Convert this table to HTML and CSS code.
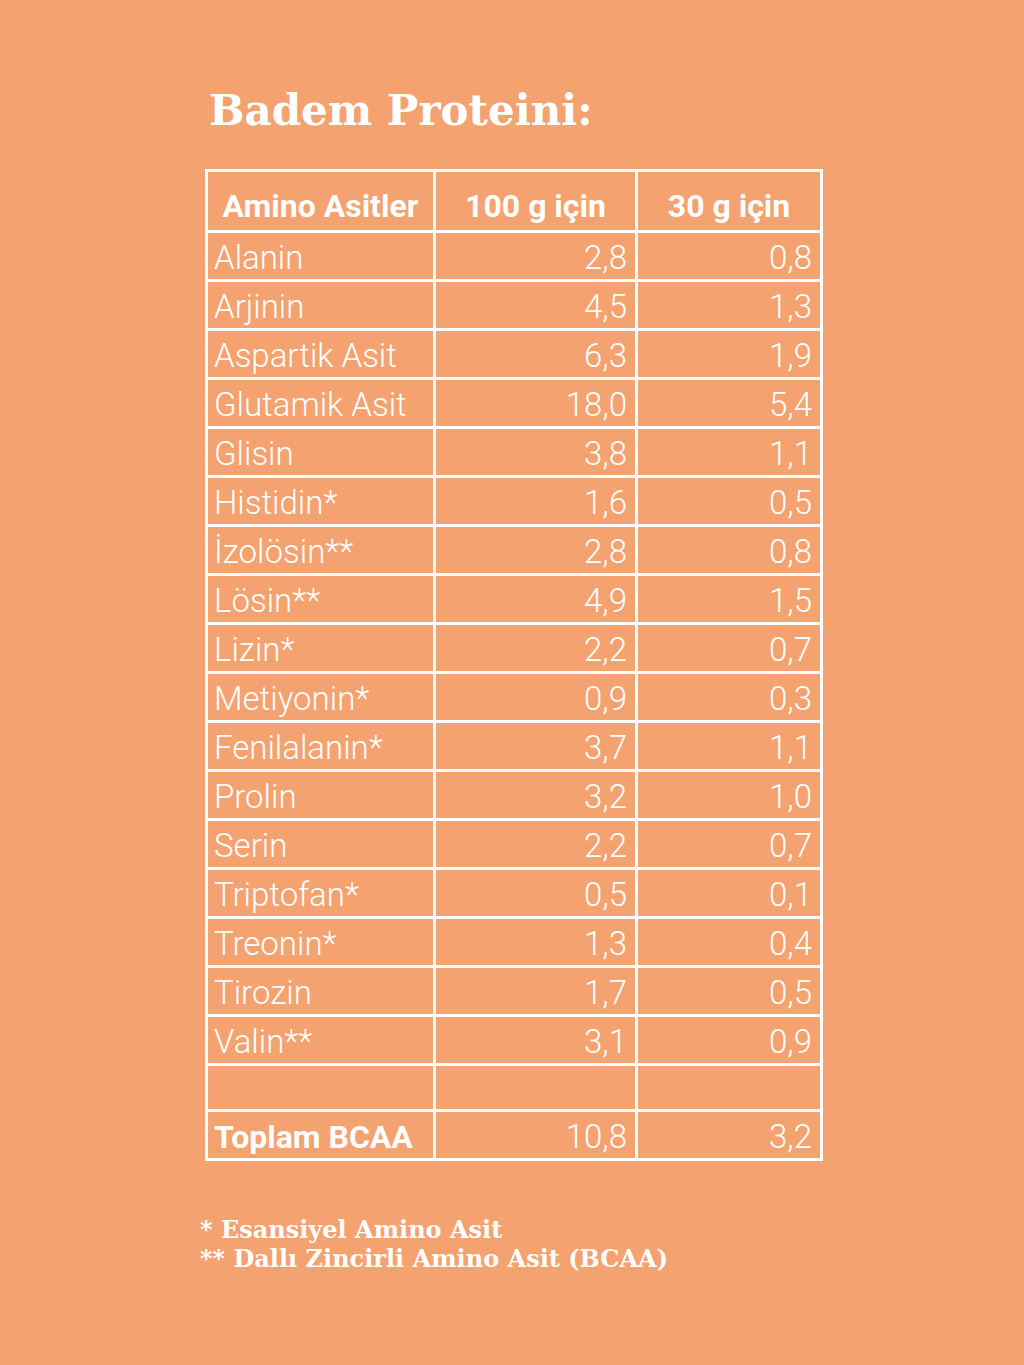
FILE: index.html
```html
<!DOCTYPE html>
<html lang="tr">
<head>
<meta charset="utf-8">
<link rel="stylesheet" href="styles.css">
</head>
<body>
<main class="page">
  <h1 class="title">Badem Proteini:</h1>
  <table class="amino">
    <colgroup><col class="c1"><col class="c2"><col class="c3"></colgroup>
    <thead>
      <tr><th>Amino Asitler</th><th>100 g için</th><th>30 g için</th></tr>
    </thead>
    <tbody>
      <tr><td>Alanin</td><td>2,8</td><td>0,8</td></tr>
      <tr><td>Arjinin</td><td>4,5</td><td>1,3</td></tr>
      <tr><td>Aspartik Asit</td><td>6,3</td><td>1,9</td></tr>
      <tr><td>Glutamik Asit</td><td>18,0</td><td>5,4</td></tr>
      <tr><td>Glisin</td><td>3,8</td><td>1,1</td></tr>
      <tr><td>Histidin*</td><td>1,6</td><td>0,5</td></tr>
      <tr><td>İzolösin**</td><td>2,8</td><td>0,8</td></tr>
      <tr><td>Lösin**</td><td>4,9</td><td>1,5</td></tr>
      <tr><td>Lizin*</td><td>2,2</td><td>0,7</td></tr>
      <tr><td>Metiyonin*</td><td>0,9</td><td>0,3</td></tr>
      <tr><td>Fenilalanin*</td><td>3,7</td><td>1,1</td></tr>
      <tr><td>Prolin</td><td>3,2</td><td>1,0</td></tr>
      <tr><td>Serin</td><td>2,2</td><td>0,7</td></tr>
      <tr><td>Triptofan*</td><td>0,5</td><td>0,1</td></tr>
      <tr><td>Treonin*</td><td>1,3</td><td>0,4</td></tr>
      <tr><td>Tirozin</td><td>1,7</td><td>0,5</td></tr>
      <tr><td>Valin**</td><td>3,1</td><td>0,9</td></tr>
      <tr><td></td><td></td><td></td></tr>
      <tr class="total"><td>Toplam BCAA</td><td>10,8</td><td>3,2</td></tr>
    </tbody>
  </table>
  <div class="notes">
    <p>* Esansiyel Amino Asit</p>
    <p>** Dallı Zincirli Amino Asit (BCAA)</p>
  </div>
</main>
</body>
</html>
```

FILE: styles.css
```css
html, body {
  margin: 0;
  padding: 0;
  background: #f4a26f;
}
.page {
  width: 1024px;
  height: 1365px;
  box-sizing: border-box;
  padding: 86px 0 0 205px;
  color: #ffffff;
}
.title {
  margin: 0 0 0 4px;
  font-family: "DejaVu Serif", "Liberation Serif", serif;
  font-weight: 700;
  font-size: 42px;
  line-height: 50px;
  height: 50px;
  letter-spacing: 0;
}
.amino {
  margin-top: 33px;
  border-collapse: collapse;
  table-layout: fixed;
  width: 618px;
  border: 3px solid #fff;
  font-family: Roboto, "Noto Sans", sans-serif;
  font-weight: 300;
  font-size: 33px;
}
.c1 { width: 228px; }
.c2 { width: 202px; }
.c3 { width: 185px; }
.amino th, .amino td {
  border: 3px solid #fff;
  padding: 0 8px;
  white-space: nowrap;
  overflow: hidden;
  box-sizing: border-box;
  vertical-align: middle;
}
.amino th {
  height: 58px;
  font-weight: 700;
  font-size: 32px;
  text-align: center;
  padding-top: 10px;
  line-height: 48px;
}
.amino td {
  height: 46px;
  padding-top: 4px;
  line-height: 42px;
  text-align: right;
}
.amino td:first-child {
  text-align: left;
  padding-left: 6px;
}
.amino .total td:first-child {
  font-weight: 700;
  font-size: 32px;
}
.notes {
  margin-top: 54px;
  margin-left: -5px;
  font-family: "DejaVu Serif", "Liberation Serif", serif;
  font-weight: 700;
  font-size: 24px;
  line-height: 29px;
  letter-spacing: 0;
}
.notes p { margin: 0; }
```
